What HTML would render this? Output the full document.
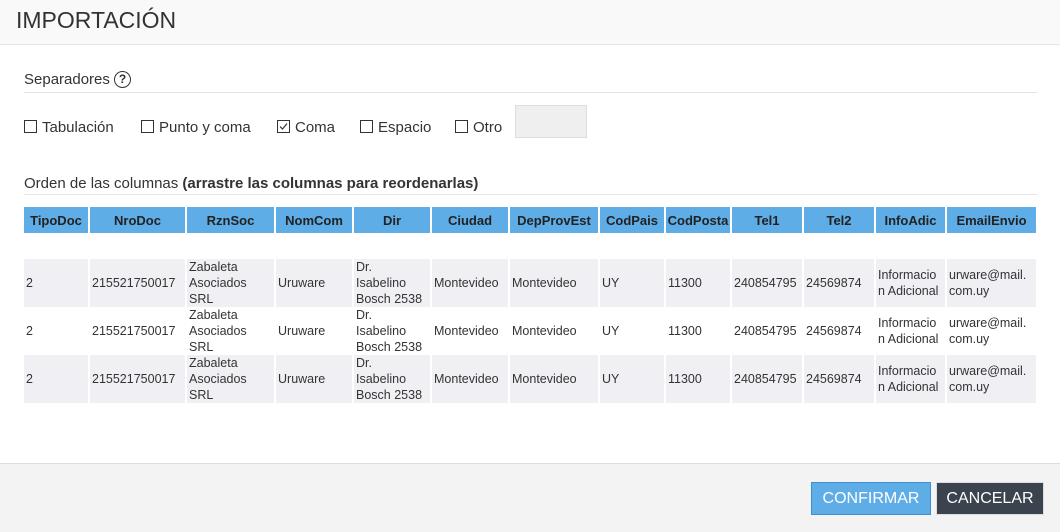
<html><head><style>
body{margin:0;width:1060px;height:531px;background:#fff;font-family:"Liberation Sans",sans-serif;color:#333;position:relative;overflow:hidden}
.hdr{position:absolute;left:0;top:0;width:1060px;height:44px;background:#f9f9f9;border-bottom:1px solid #e5e5e5}
.hdr span{position:absolute;left:16px;top:7px;font-size:23px;color:#333}
.sec{position:absolute;left:24px;width:1013px;border-bottom:1px solid #e5e5e5;font-size:15px;padding-bottom:4px}
.cb{position:absolute;top:119px;font-size:15px}
.cb i{display:inline-block;width:11px;height:11px;border:1px solid #333;vertical-align:-1px;margin-right:5px;position:relative;font-style:normal}
table{position:absolute;left:24px;top:207px;border-collapse:collapse;font-size:12.5px;table-layout:fixed}
th{background:#5fade6;color:#222;height:26px;border-right:2px solid #fff;font-size:13px;padding:0}
td{border-right:2px solid #fff;padding:0 2px;line-height:16px;height:48px;vertical-align:middle;color:#333;overflow:hidden}
tr.g td{background:#f0eff4}
.btn{position:absolute;top:482px;height:31px;font-size:16px;color:#fff;text-align:center;line-height:31px}
</style></head><body>
<div class="hdr"><span>IMPORTACIÓN</span></div>
<div class="sec" style="top:71px">Separadores <span style="display:inline-block;width:15px;height:15px;border:1.5px solid #333;border-radius:50%;font-size:12px;text-align:center;line-height:15px;font-weight:bold;vertical-align:1px">?</span></div>
<div class="cb" style="left:24px"><i></i>Tabulación</div>
<div class="cb" style="left:141px"><i></i>Punto y coma</div>
<div class="cb" style="left:277px"><i><svg width="11" height="11" style="position:absolute;left:0;top:0"><path d="M2 5.5 L4.5 8 L9 2.5" stroke="#333" fill="none" stroke-width="1.2"/></svg></i>Coma</div>
<div class="cb" style="left:360px"><i></i>Espacio</div>
<div class="cb" style="left:455px"><i></i>Otro</div>
<div style="position:absolute;left:515px;top:105px;width:70px;height:31px;background:#efefef;border:1px solid #ddd"></div>
<div class="sec" style="top:175px;padding-bottom:2px">Orden de las columnas <b>(arrastre las columnas para reordenarlas)</b></div>
<table>
<colgroup><col style="width:65px"><col style="width:97px"><col style="width:89px"><col style="width:78px"><col style="width:78px"><col style="width:78px"><col style="width:90px"><col style="width:66px"><col style="width:66px"><col style="width:72px"><col style="width:72px"><col style="width:71px"><col style="width:91px"></colgroup>
<tr><th>TipoDoc</th><th>NroDoc</th><th>RznSoc</th><th>NomCom</th><th>Dir</th><th>Ciudad</th><th>DepProvEst</th><th>CodPais</th><th>CodPosta</th><th>Tel1</th><th>Tel2</th><th>InfoAdic</th><th>EmailEnvio</th></tr>
<tr><td colspan="13" style="height:26px;padding:0"></td></tr>
<tr class="g"><td>2</td><td>215521750017</td><td>Zabaleta<br>Asociados<br>SRL</td><td>Uruware</td><td>Dr.<br>Isabelino<br>Bosch 2538</td><td>Montevideo</td><td>Montevideo</td><td>UY</td><td>11300</td><td>240854795</td><td>24569874</td><td>Informacio<br>n Adicional</td><td>urware@mail.<br>com.uy</td></tr>
<tr><td>2</td><td>215521750017</td><td>Zabaleta<br>Asociados<br>SRL</td><td>Uruware</td><td>Dr.<br>Isabelino<br>Bosch 2538</td><td>Montevideo</td><td>Montevideo</td><td>UY</td><td>11300</td><td>240854795</td><td>24569874</td><td>Informacio<br>n Adicional</td><td>urware@mail.<br>com.uy</td></tr>
<tr class="g"><td>2</td><td>215521750017</td><td>Zabaleta<br>Asociados<br>SRL</td><td>Uruware</td><td>Dr.<br>Isabelino<br>Bosch 2538</td><td>Montevideo</td><td>Montevideo</td><td>UY</td><td>11300</td><td>240854795</td><td>24569874</td><td>Informacio<br>n Adicional</td><td>urware@mail.<br>com.uy</td></tr>
</table>
<div style="position:absolute;left:0;top:463px;width:1060px;height:68px;background:#f3f3f3;border-top:1px solid #ddd"></div>
<div class="btn" style="left:811px;width:118px;background:#5fade6;border:1px solid #3d8fd0">CONFIRMAR</div>
<div class="btn" style="left:936px;width:106px;background:#3a434e;border:1px solid #ddd">CANCELAR</div>
</body></html>
